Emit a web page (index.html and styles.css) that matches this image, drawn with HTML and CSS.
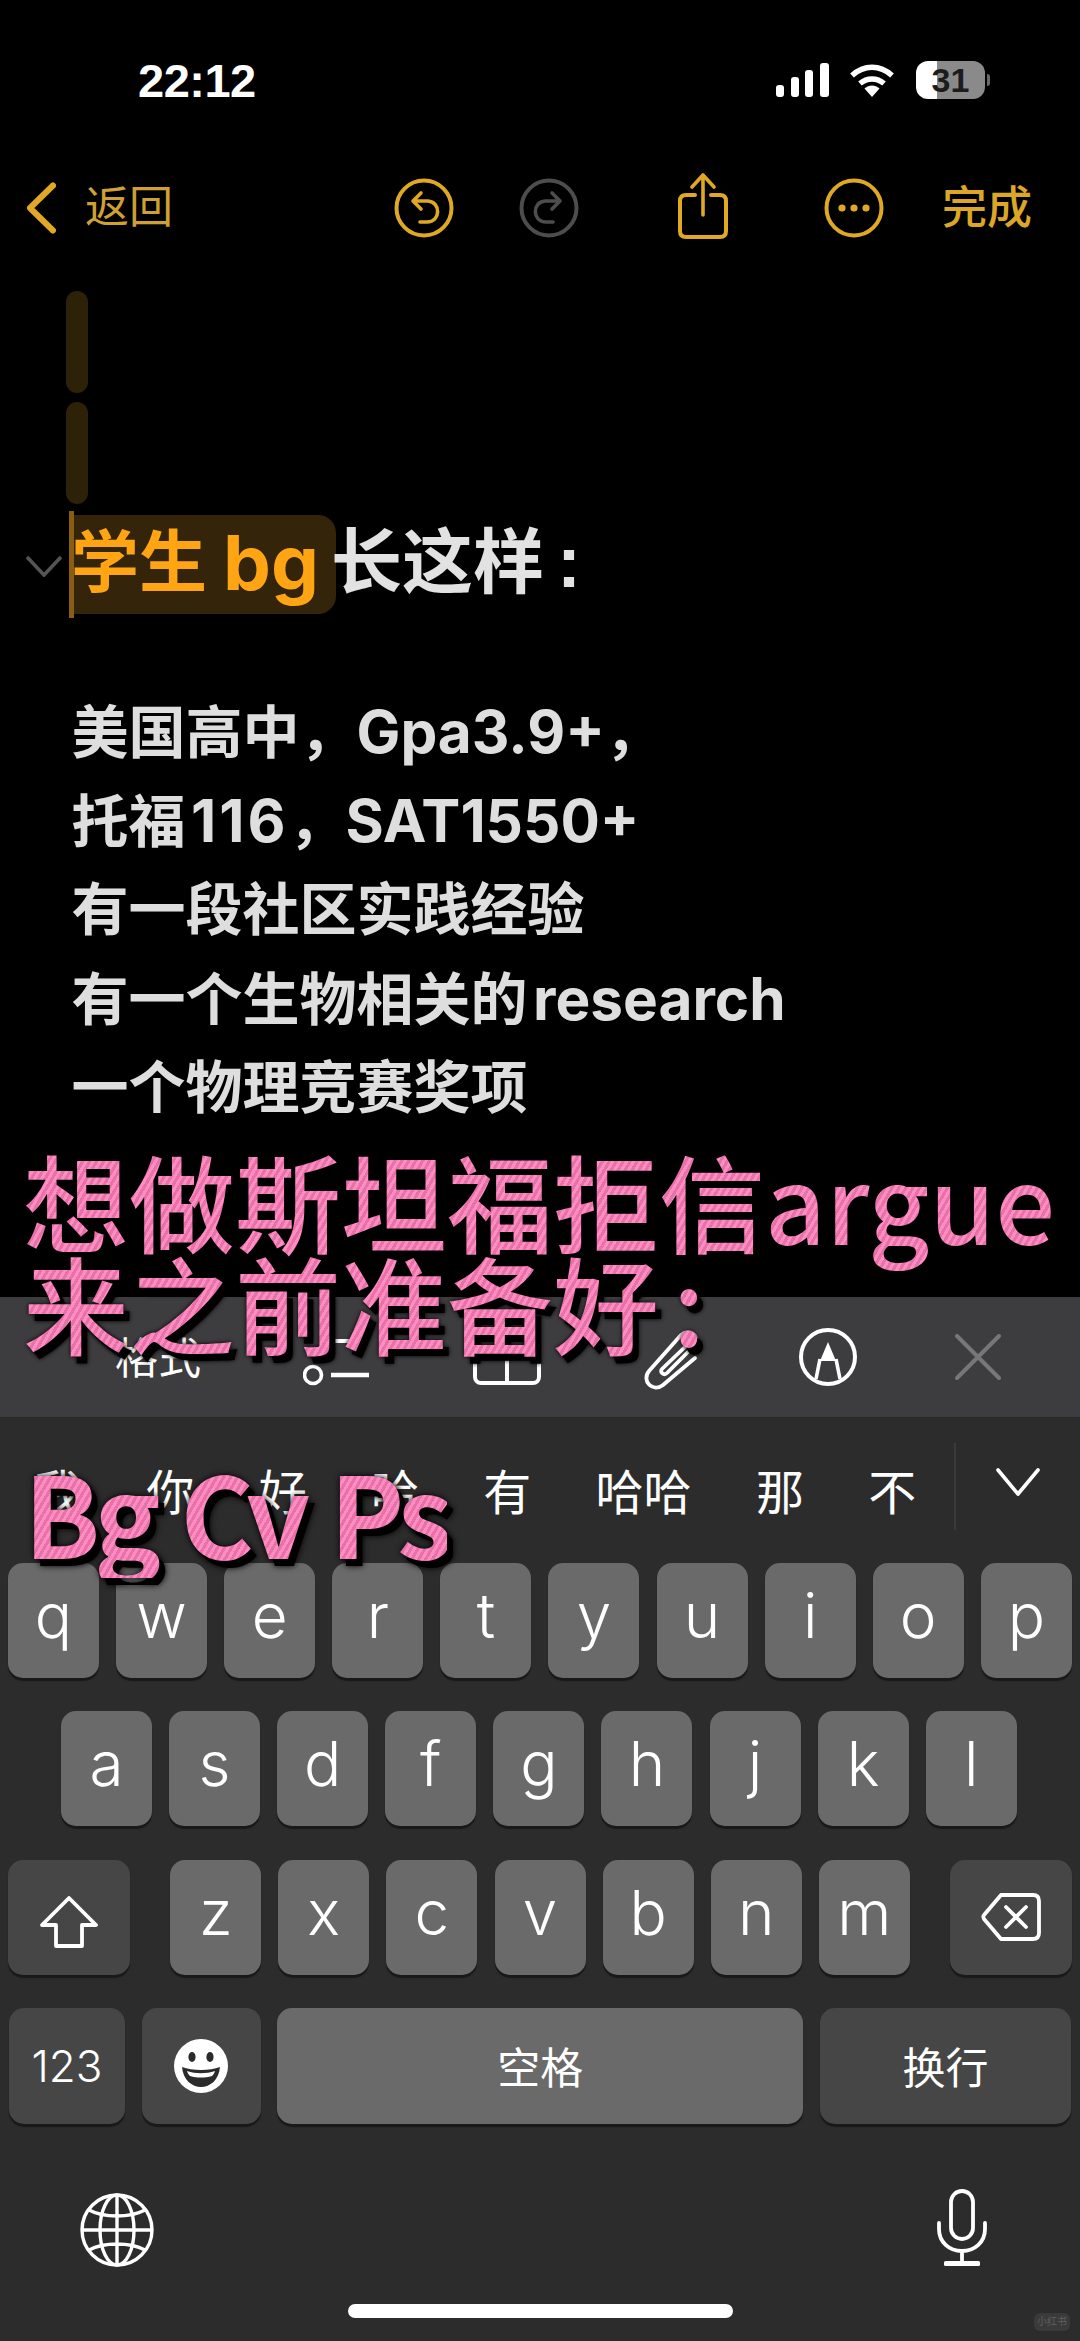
FILE: index.html
```html
<!DOCTYPE html>
<html lang="zh-CN">
<head>
<meta charset="utf-8">
<title>备忘录</title>
<link rel="stylesheet" href="styles.css">
</head>
<body>
<main class="phone">
  <header class="status">
    <span class="clock">22:12</span>
    <div class="status-icons">
      <svg class="signal" viewBox="0 0 53 34"><rect x="0" y="22" width="8" height="12" rx="3"/><rect x="15" y="14" width="8" height="20" rx="3"/><rect x="29" y="7" width="8" height="27" rx="3"/><rect x="44" y="0" width="9" height="34" rx="3"/></svg>
      <svg class="wifi" viewBox="0 0 46 34"><path d="M3 12.5C15 1.5 31 1.5 43 12.5" fill="none" stroke="#fff" stroke-width="5.5"/><path d="M11 20.5C18 14.5 28 14.5 35 20.5" fill="none" stroke="#fff" stroke-width="5.5"/><path d="M15.5 25.5C20 21.5 26 21.5 30.5 25.5L23 34Z" fill="#fff"/></svg>
      <div class="battery"><span class="battery-num">31</span></div>
      <span class="battery-nub"></span>
    </div>
  </header>

  <nav class="nav">
    <svg class="back" viewBox="0 0 30 52"><path d="M27 3.5L4 26L27 48.5" fill="none" stroke="#e0a823" stroke-width="6" stroke-linecap="round" stroke-linejoin="round"/></svg>
    <span class="back-label">返回</span>
    <svg class="round undo" viewBox="0 0 60 60"><circle cx="30" cy="30" r="27.5" fill="none" stroke="#e0a823" stroke-width="4"/><path d="M27 15L19 23L27 31M19 23H34C47 24 47 44 33 44H26" fill="none" stroke="#e0a823" stroke-width="3.6" stroke-linecap="round" stroke-linejoin="round"/></svg>
    <svg class="round redo" viewBox="0 0 60 60"><circle cx="30" cy="30" r="27.5" fill="none" stroke="#4d4d4d" stroke-width="4"/><path d="M33 15L41 23L33 31M41 23H26C13 24 13 44 27 44H34" fill="none" stroke="#4d4d4d" stroke-width="3.6" stroke-linecap="round" stroke-linejoin="round"/></svg>
    <svg class="share" viewBox="0 0 50 66"><path d="M17 22H8C4 22 2 24 2 28V58C2 62 4 64 8 64H42C46 64 48 62 48 58V28C48 24 46 22 42 22H33" fill="none" stroke="#e0a823" stroke-width="4" stroke-linecap="round"/><path d="M25 42V3M14 14L25 2L36 14" fill="none" stroke="#e0a823" stroke-width="3.6" stroke-linecap="round" stroke-linejoin="round"/></svg>
    <svg class="round more" viewBox="0 0 60 60"><circle cx="30" cy="30" r="27.5" fill="none" stroke="#e0a823" stroke-width="4"/><circle cx="18" cy="30" r="3.6" fill="#e0a823"/><circle cx="30" cy="30" r="3.6" fill="#e0a823"/><circle cx="42" cy="30" r="3.6" fill="#e0a823"/></svg>
    <span class="done">完成</span>
  </nav>

  <section class="note">
    <div class="drag-bars">
      <span class="drag-bar"></span>
      <span class="drag-bar"></span>
    </div>
    <h1 class="heading">
      <svg class="fold" viewBox="0 0 38 22"><path d="M2 2L19 20L36 2" fill="none" stroke="#555" stroke-width="3.6"/></svg>
      <span class="caret"></span>
      <span class="mark">学生 <span class="mark-latin">bg</span></span>
      <span class="heading-rest">长这样<span class="heading-colon">:</span></span>
    </h1>
    <p class="line">美国高中，<span class="latin">Gpa3.9+</span>，</p>
    <p class="line">托福 <span class="latin latin-wide">116</span>，<span class="latin">SAT1550+</span></p>
    <p class="line">有一段社区实践经验</p>
    <p class="line">有一个生物相关的 <span class="latin">research</span></p>
    <p class="line">一个物理竞赛奖项</p>
  </section>

  <section class="keyboard">
    <div class="toolbar">
      <span class="tool-label">格式</span>
      <svg class="tool-list" viewBox="0 0 68 50"><path d="M30 4H66" stroke="#fff" stroke-width="4"/><circle cx="10" cy="38" r="8.5" fill="none" stroke="#fff" stroke-width="3.6"/><path d="M28 38H66" stroke="#fff" stroke-width="4.5"/></svg>
      <svg class="tool-table" viewBox="0 0 68 52"><rect x="2" y="2" width="64" height="48" rx="6" fill="none" stroke="#fff" stroke-width="4"/><path d="M2 22H66M34 2V50" stroke="#fff" stroke-width="4"/></svg>
      <svg class="tool-clip" viewBox="-2 0 62 66"><path d="M52 33L20 60C10 68 -2 56 6 46L38 10C46 2 58 12 52 20L24 48C21 51 16 47 19 44L43 21" fill="none" stroke="#fff" stroke-width="3.8" stroke-linecap="round" stroke-linejoin="round"/></svg>
      <svg class="tool-pen" viewBox="0 0 60 60"><circle cx="30" cy="30" r="27" fill="none" stroke="#fff" stroke-width="4"/><path d="M30 15L38 34H22Z" fill="#fff"/><path d="M22 32L18 52M38 32L42 52" fill="none" stroke="#fff" stroke-width="3.6"/></svg>
      <svg class="tool-close" viewBox="0 0 46 46"><path d="M2 2L44 44M44 2L2 44" stroke="#777" stroke-width="4" stroke-linecap="round"/></svg>
    </div>

    <div class="suggestions">
      <div class="candidates">
        <span>我</span><span>你</span><span>好</span><span>哈</span><span>有</span><span>哈哈</span><span>那</span><span>不</span>
      </div>
      <span class="candidate-rule"></span>
      <svg class="candidate-more" viewBox="0 0 44 28"><path d="M2 2L22 26L42 2" fill="none" stroke="#fff" stroke-width="3.6" stroke-linecap="round" stroke-linejoin="round"/></svg>
    </div>

    <div class="keys">
      <div class="row row-top">
        <button class="key">q</button><button class="key">w</button><button class="key">e</button><button class="key">r</button><button class="key">t</button><button class="key">y</button><button class="key">u</button><button class="key">i</button><button class="key">o</button><button class="key">p</button>
      </div>
      <div class="row row-home">
        <button class="key">a</button><button class="key">s</button><button class="key">d</button><button class="key">f</button><button class="key">g</button><button class="key">h</button><button class="key">j</button><button class="key">k</button><button class="key">l</button>
      </div>
      <div class="row row-shift">
        <button class="key key-dark key-side">
          <svg class="icon-shift" viewBox="0 0 58 52"><path d="M29 2L56 29H42V50H16V29H2Z" fill="none" stroke="#fff" stroke-width="3.8" stroke-linejoin="round"/></svg>
        </button>
        <div class="letters">
          <button class="key">z</button><button class="key">x</button><button class="key">c</button><button class="key">v</button><button class="key">b</button><button class="key">n</button><button class="key">m</button>
        </div>
        <button class="key key-dark key-side">
          <svg class="icon-delete" viewBox="0 0 60 50"><path d="M20 3H52C56 3 58 5 58 9V41C58 45 56 47 52 47H20L3 27C2 25 2 24 3 23Z" fill="none" stroke="#fff" stroke-width="3.8" stroke-linejoin="round"/><path d="M25 15L45 35M45 15L25 35" stroke="#fff" stroke-width="3.8" stroke-linecap="round"/></svg>
        </button>
      </div>
      <div class="row row-bottom">
        <button class="key key-dark key-num">123</button>
        <button class="key key-dark key-emoji">
          <svg class="icon-emoji" viewBox="0 0 54 56"><circle cx="27" cy="28" r="27" fill="#fff"/><ellipse cx="18" cy="19" rx="3.6" ry="5" fill="#2b2b2b"/><ellipse cx="36" cy="19" rx="3.6" ry="5" fill="#2b2b2b"/><path d="M8 29C18 33 36 33 46 29C45 42 36 49 27 49C18 49 9 42 8 29Z" fill="#2b2b2b"/><path d="M13 33C22 36 32 36 41 33C40 36 39 37 38 38C31 40 23 40 16 38C15 37 14 36 13 33Z" fill="#fff"/></svg>
        </button>
        <button class="key key-space">空格</button>
        <button class="key key-dark key-return">换行</button>
      </div>
    </div>

    <div class="dock">
      <svg class="icon-globe" viewBox="0 0 74 74"><g fill="none" stroke="#fff" stroke-width="3.4"><circle cx="37" cy="37" r="35"/><ellipse cx="37" cy="37" rx="17" ry="35"/><path d="M37 2V72M2 37H72M9 17C24 25 50 25 65 17M9 57C24 49 50 49 65 57"/></g></svg>
      <svg class="icon-mic" viewBox="0 0 52 78"><g fill="none" stroke="#fff" stroke-width="3.8" stroke-linecap="round"><rect x="15" y="2" width="22" height="48" rx="11"/><path d="M3 34V40C3 53 13 62 26 62C39 62 49 53 49 40V34"/><path d="M26 62V75"/></g><rect x="8" y="72" width="36" height="5" rx="1.5" fill="#fff"/></svg>
    </div>

    <div class="home-row">
      <span class="home-bar"></span>
      <span class="watermark">小红书</span>
    </div>
  </section>

  <div class="sticker sticker-title">
    <div>想做斯坦福拒信argue</div>
    <div>来之前准备好<span class="sticker-colon">:</span></div>
  </div>
  <div class="sticker sticker-tags">Bg Cv Ps</div>
</main>
</body>
</html>
```

FILE: styles.css
```css
* { box-sizing: border-box; }

html, body {
  margin: 0;
  padding: 0;
  background: #000;
}

.phone {
  position: relative;
  width: 1080px;
  height: 2341px;
  overflow: hidden;
  display: flex;
  flex-direction: column;
  background: #000;
  color: #fff;
  font-family: "Liberation Sans", "Noto Sans CJK SC", sans-serif;
}

/* status bar */
.status {
  height: 160px;
  flex: none;
  display: flex;
  align-items: center;
  padding-left: 138px;
}

.clock {
  font-size: 47px;
  font-weight: 700;
  letter-spacing: -0.5px;
  line-height: 1;
}

.status-icons {
  margin-left: auto;
  padding-right: 90px;
  display: flex;
  align-items: center;
}

.signal { width: 53px; height: 34px; fill: #fff; }
.wifi { width: 46px; height: 34px; margin-left: 20px; }

.battery {
  width: 69px;
  height: 38px;
  margin-left: 21px;
  border-radius: 12px;
  background: linear-gradient(90deg, #fff 0 21px, #8a8a8a 21px);
  display: flex;
  align-items: center;
  justify-content: center;
}

.battery-num {
  color: #1c1c1c;
  font-size: 34px;
  font-weight: 700;
  line-height: 1;
}

.battery-nub {
  width: 3px;
  height: 12px;
  margin-left: 2px;
  border-radius: 0 3px 3px 0;
  background: #6a6a6a;
}

/* notes navigation */
.nav {
  height: 96px;
  flex: none;
  display: flex;
  align-items: center;
  padding-left: 26px;
  color: #dca727;
}

.back { width: 30px; height: 52px; flex: none; }
.back-label { margin-left: 29px; width: 88px; flex: none; white-space: nowrap; font-size: 44px; line-height: 1; color: #cfa032; }
.round { width: 60px; height: 60px; flex: none; }
.undo { margin-left: 221px; }
.redo { margin-left: 65px; }
.share { width: 50px; height: 66px; flex: none; margin-left: 99px; margin-top: -4px; }
.more { margin-left: 96px; }
.done { margin-left: 58px; flex: none; font-size: 45px; font-weight: 500; line-height: 1; color: #dca727; white-space: nowrap; }

/* note body */
.note {
  flex: 1;
  padding-top: 35px;
}

.drag-bars {
  margin-left: 66px;
  width: 22px;
  display: flex;
  flex-direction: column;
  gap: 9px;
}

.drag-bar {
  height: 102px;
  border-radius: 11px;
  background: #2d2108;
}

.heading {
  height: 107px;
  margin: 7px 0 69px;
  padding-left: 25px;
  display: flex;
  align-items: center;
  font-family: "Inter", "Noto Sans CJK SC", sans-serif;
  font-size: 68px;
  font-weight: 700;
  line-height: 1;
}

.fold { width: 38px; height: 22px; flex: none; margin-top: 2px; }

.caret {
  position: relative;
  z-index: 1;
  width: 5px;
  height: 107px;
  margin-left: 6px;
  flex: none;
  background: #8a5e10;
}

.mark {
  height: 99px;
  width: 265px;
  flex: none;
  padding: 0 0 6px;
  margin-left: -3px;
  border-radius: 0 18px 18px 0;
  background: #33240a;
  color: #ffa514;
  display: flex;
  align-items: center;
  white-space: pre;
}

.mark-latin { font-size: 76px; }

.heading-rest { margin-left: -5px; padding-bottom: 6px; color: #e2e2e2; font-size: 71px; display: flex; }
.heading-colon { margin-left: 13px; font-family: "Liberation Sans", sans-serif; font-size: 72px; }

.line {
  margin: 0;
  padding-left: 71.5px;
  height: 89px;
  font-family: "Inter", "Noto Sans CJK SC", sans-serif;
  font-size: 57px;
  font-weight: 700;
  line-height: 89px;
  color: #dedede;
  white-space: pre;
  word-spacing: -8px;
}

.latin { font-size: 58.5px; }
.latin-wide { letter-spacing: 3px; }

/* keyboard */
.keyboard {
  flex: none;
  height: 1044px;
  background: #2c2c2c;
  display: flex;
  flex-direction: column;
}

.toolbar {
  height: 121px;
  flex: none;
  position: relative;
  display: flex;
  align-items: flex-start;
  padding-left: 115px;
  background: #3d3d3f;
  border-bottom: 1px solid #2a2a2a;
}

.tool-label { margin-top: 39px; width: 87px; flex: none; white-space: nowrap; font-size: 43px; line-height: 1.1; }
.tool-list { width: 68px; height: 50px; margin: 40px 0 0 101px; flex: none; }
.tool-table { width: 68px; height: 52px; margin: 36px 0 0 102px; flex: none; }
.tool-clip { width: 62px; height: 66px; margin: 28px 0 0 100px; flex: none; }
.tool-pen { width: 60px; height: 60px; margin: 30px 0 0 95px; flex: none; }
.tool-close { width: 46px; height: 46px; margin: 37px 0 0 97px; flex: none; }

.suggestions {
  height: 145px;
  flex: none;
  display: flex;
  align-items: flex-start;
  padding-left: 34px;
}

.candidates {
  display: flex;
  gap: 64.3px;
  margin-top: 48px;
  font-size: 48px;
  line-height: 56px;
  white-space: nowrap;
}

.candidate-rule {
  width: 2px;
  height: 87px;
  margin: 25px 0 0 auto;
  background: #3b3b3b;
}

.candidate-more { width: 44px; height: 28px; margin: 50px 40px 0 40px; flex: none; }

.keys {
  display: flex;
  flex-direction: column;
  gap: 33.3px;
}

.row {
  height: 115px;
  display: flex;
  gap: 17.1px;
}

.row-top { padding-left: 8px; }
.row-home { padding-left: 61px; }
.row-shift { padding: 0 8px; justify-content: space-between; gap: 0; }
.row-bottom { padding: 0 9px; height: 116px; justify-content: space-between; gap: 0; }

.letters { display: flex; gap: 17.1px; }

.key {
  width: 91px;
  height: 100%;
  flex: none;
  padding: 0 0 9px;
  border: 0;
  border-radius: 15px;
  background: #6a6a6a;
  box-shadow: 0 3px 1px #191919;
  color: #fff;
  font-family: "Inter", "Liberation Sans", sans-serif;
  font-size: 62px;
  font-weight: 300;
  line-height: 1;
  display: flex;
  align-items: center;
  justify-content: center;
}

.key-dark { background: #464646; }
.key-side { width: 122px; padding: 0 0 4px; }
.key-num { width: 116px; font-size: 44px; padding: 0; }
.key-emoji { width: 119px; padding: 0 0 4px; }
.key-space {
  width: 526px;
  padding: 0;
  font-family: "Noto Sans CJK SC", sans-serif;
  font-size: 43px;
  font-weight: 400;
}
.key-return {
  width: 251px;
  padding: 0;
  font-family: "Noto Sans CJK SC", sans-serif;
  font-size: 43px;
  font-weight: 400;
}

.icon-shift { width: 58px; height: 52px; margin-top: 14px; }
.icon-delete { width: 60px; height: 50px; margin-top: 4px; }
.icon-emoji { width: 54px; height: 56px; margin-top: 4px; }

.dock {
  display: flex;
  justify-content: space-between;
  align-items: flex-end;
  padding: 65px 92px 0 80px;
}

.icon-globe { width: 74px; height: 74px; }
.icon-mic { width: 52px; height: 78px; }

.home-row {
  position: relative;
  display: flex;
  justify-content: center;
  padding-top: 37px;
}

.home-bar {
  width: 385px;
  height: 14px;
  border-radius: 7px;
  background: #fff;
}

.watermark {
  position: absolute;
  right: 10px;
  top: 46px;
  width: 36px;
  height: 18px;
  border-radius: 6px;
  background: #3a3a3a;
  color: #5f5f5f;
  font-size: 10px;
  line-height: 18px;
  text-align: center;
}

/* pink captions laid over the screen */
.sticker {
  position: absolute;
  font-family: "Noto Sans CJK SC", sans-serif;
  font-weight: 500;
  color: transparent;
  background: repeating-linear-gradient(120deg, #ff8cc2 0 3px, #e872a8 3px 6px);
  -webkit-background-clip: text;
  background-clip: text;
  white-space: nowrap;
}

.sticker-title {
  left: 23px;
  top: 1148px;
  font-size: 106px;
  line-height: 102px;
  padding-bottom: 10px;
  filter: drop-shadow(0 0 2px #000) drop-shadow(6px 7px 0 #000);
}

.sticker-colon { margin-left: 14px; }

.sticker-tags {
  left: 24px;
  top: 1442px;
  font-size: 112px;
  font-weight: 700;
  line-height: 136px;
  word-spacing: 6px;
  letter-spacing: -6px;
  filter: drop-shadow(0 0 3px #000) drop-shadow(6px 7px 0 #000);
}
```
